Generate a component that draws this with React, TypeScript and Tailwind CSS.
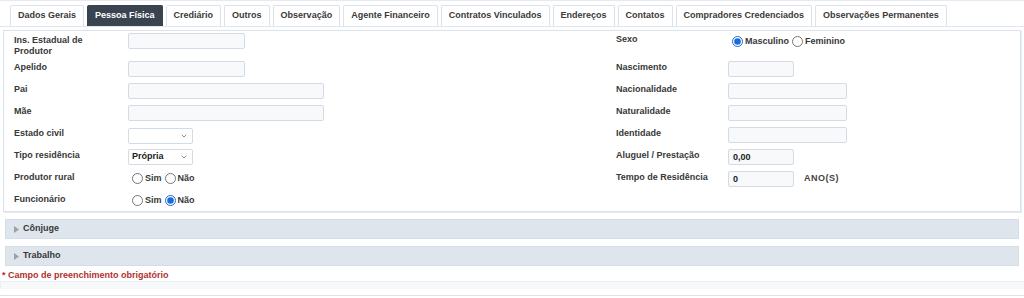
import { ChevronDown } from "lucide-react";

const tabs = [
  "Dados Gerais",
  "Pessoa Física",
  "Crediário",
  "Outros",
  "Observação",
  "Agente Financeiro",
  "Contratos Vinculados",
  "Endereços",
  "Contatos",
  "Compradores Credenciados",
  "Observações Permanentes",
];

const Field = ({ w, value = "" }: { w: string; value?: string }) => (
  <div
    className={`${w} h-[16px] rounded-[2px] border border-[#d3dbe7] bg-[#f8f9fb] px-[4px] leading-[14px] text-[#222]`}
  >
    {value}
  </div>
);

const Select = ({ value = "" }: { value?: string }) => (
  <div className="flex h-[16px] w-[65px] items-center justify-between rounded-[2px] border border-[#d3dbe7] bg-white pl-[3px] pr-[4px] text-[#222]">
    <span>{value}</span>
    <ChevronDown className="h-[8px] w-[8px] text-[#777]" strokeWidth={2.5} />
  </div>
);

const Radio = ({ label, checked = false }: { label: string; checked?: boolean }) => (
  <label className="flex items-center gap-[2px]">
    <input
      type="radio"
      readOnly
      checked={checked}
      className="m-0 h-[11px] w-[11px] accent-[#1a6bd8]"
    />
    <span>{label}</span>
  </label>
);

const Row = ({
  h,
  left,
  leftLabel,
  rightLabel,
  right,
}: {
  h: string;
  leftLabel: React.ReactNode;
  left: React.ReactNode;
  rightLabel?: React.ReactNode;
  right?: React.ReactNode;
}) => (
  <div className={`flex ${h}`}>
    <div className="flex w-[602px] shrink-0">
      <div className="w-[114px] shrink-0 pt-[1px] leading-[11px]">{leftLabel}</div>
      <div>{left}</div>
    </div>
    <div className="flex">
      <div className="w-[112px] shrink-0 pt-[1px] leading-[11px]">{rightLabel}</div>
      <div>{right}</div>
    </div>
  </div>
);

const Bar = ({ title }: { title: string }) => (
  <div className="mx-[5px] flex h-[20px] items-center gap-[4px] border border-[#d5dde8] bg-[#dfe5ed] pl-[8px]">
    <svg width="5" height="7" viewBox="0 0 5 7">
      <path d="M0 0 L5 3.5 L0 7 Z" fill="#9aa1aa" />
    </svg>
    <span>{title}</span>
  </div>
);

export default function App() {
  return (
    <div className="h-[298px] w-[1024px] overflow-hidden border-t border-[#e6eaf0] bg-white font-['Liberation_Sans',Arial,sans-serif] text-[9px] font-bold text-[#383838]">
      <div className="flex h-[26px] gap-[3px] border-b border-[#e0e6ee] pl-[10px] pt-[4px]">
        {tabs.map((t) => (
          <div
            key={t}
            className={`flex h-[21px] items-center rounded-t-[2px] border border-b-0 px-[7px] ${
              t === "Pessoa Física"
                ? "border-[#3a4350] bg-[#3a4350] text-white"
                : "border-[#dbe2ec] bg-white text-[#3a3a3a]"
            }`}
          >
            {t}
          </div>
        ))}
      </div>

      <div className="ml-[3px] mt-[3px] w-[1018px] border border-[#dbe2ec] pl-[10px] pt-[2px] shadow-[1px_1px_0_#e6ebf2]">
        <Row
          h="h-[28px]"
          leftLabel={
            <div className="pt-[1px]">
              Ins. Estadual de
              <br />
              Produtor
            </div>
          }
          left={<Field w="w-[117px]" />}
          rightLabel="Sexo"
          right={
            <div className="flex gap-[3px] pl-[4px] pt-[2px]">
              <Radio label="Masculino" checked />
              <Radio label="Feminino" />
            </div>
          }
        />
        <Row
          h="h-[22px]"
          leftLabel="Apelido"
          left={<Field w="w-[117px]" />}
          rightLabel="Nascimento"
          right={<Field w="w-[66px]" />}
        />
        <Row
          h="h-[22px]"
          leftLabel="Pai"
          left={<Field w="w-[196px]" />}
          rightLabel="Nacionalidade"
          right={<Field w="w-[119px]" />}
        />
        <Row
          h="h-[22px]"
          leftLabel="Mãe"
          left={<Field w="w-[196px]" />}
          rightLabel="Naturalidade"
          right={<Field w="w-[119px]" />}
        />
        <Row
          h="h-[22px]"
          leftLabel="Estado civil"
          left={<div className="pt-[1px]"><Select /></div>}
          rightLabel="Identidade"
          right={<Field w="w-[119px]" />}
        />
        <Row
          h="h-[22px]"
          leftLabel="Tipo residência"
          left={<Select value="Própria" />}
          rightLabel="Aluguel / Prestação"
          right={<Field w="w-[66px]" value="0,00" />}
        />
        <Row
          h="h-[22px]"
          leftLabel="Produtor rural"
          left={
            <div className="flex gap-[3px] pl-[4px] pt-[1px]">
              <Radio label="Sim" />
              <Radio label="Não" />
            </div>
          }
          rightLabel="Tempo de Residência"
          right={
            <div className="flex items-center gap-[10px]">
              <Field w="w-[66px]" value="0" />
              <span className="tracking-[0.5px] text-[#444]">ANO(S)</span>
            </div>
          }
        />
        <Row
          h="h-[18px]"
          leftLabel="Funcionário"
          left={
            <div className="flex gap-[3px] pl-[4px] pt-[1px]">
              <Radio label="Sim" />
              <Radio label="Não" checked />
            </div>
          }
        />
      </div>

      <div className="mt-[7px] flex flex-col gap-[7px]">
        <Bar title="Cônjuge" />
        <Bar title="Trabalho" />
      </div>

      <div className="mt-[3px] pl-[2px] leading-[12px] text-[#b0302e]">
        * Campo de preenchimento obrigatório
      </div>
      <div className="h-[8px] border-t border-l border-[#eceff3] bg-[#f7f8fa]" />
      <div className="mt-[6px] border-t border-[#dde3ec]" />
    </div>
  );
}
